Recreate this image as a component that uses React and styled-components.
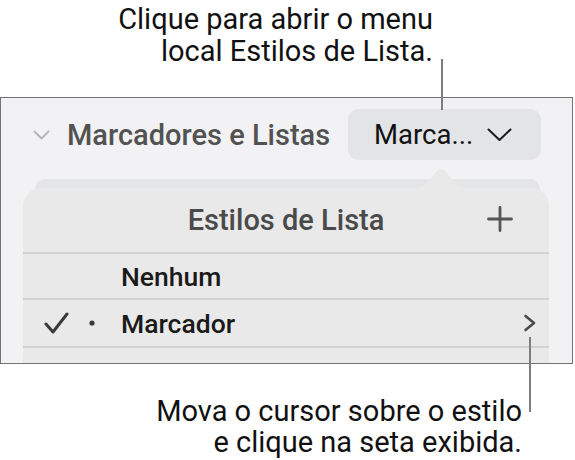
import React from 'react';
import styled, { createGlobalStyle } from 'styled-components';

const GlobalStyle = createGlobalStyle`
  html, body { margin: 0; padding: 0; background: #ffffff; }
  body { font-family: Roboto, "Liberation Sans", Arial, sans-serif; -webkit-font-smoothing: antialiased; }
`;

const Page = styled.div`
  position: relative;
  width: 575px;
  height: 460px;
  overflow: hidden;
`;

const Caption = styled.p`
  margin: ${p => p.$top || 0}px 0 0;
  width: ${p => p.$right}px;
  text-align: right;
  font-size: 29px;
  line-height: ${p => p.$lh}px;
  color: #111;
  white-space: nowrap;
`;

const Leader = styled.div`
  position: absolute;
  left: ${p => p.$x}px;
  top: ${p => p.$y}px;
  width: 2px;
  height: ${p => p.$h}px;
  background: #7d7d7d;
  z-index: 3;
`;

const Panel = styled.div`
  margin-top: 30px;
  width: 571px;
  height: 265px;
  border: 1px solid #737373;
  background: #f2f2f4;
  overflow: hidden;
`;

const SectionHeader = styled.div`
  display: flex;
  align-items: center;
  height: 51px;
  margin-top: 11px;
  padding-left: 32px;
`;

const SectionTitle = styled.span`
  margin-left: 17px;
  font-size: 29px;
  font-weight: 500;
  color: #525252;
  flex: 1;
  white-space: nowrap;
`;

const PopupButton = styled.div`
  display: flex;
  align-items: center;
  justify-content: space-between;
  width: 193px;
  height: 51px;
  box-sizing: border-box;
  margin-right: 31px;
  padding: 0 29px 0 26px;
  border-radius: 11px;
  background: #e3e4e6;
  font-size: 27.5px;
  color: #111;
`;

const PopoverArea = styled.div`
  position: relative;
  margin-top: 19px;
`;

const BackLayer = styled.div`
  margin: 0 32px 0 34px;
  height: 22px;
  border-radius: 10px 10px 0 0;
  background: #e4e5e7;
`;

const Popover = styled.div`
  position: relative;
  margin: -13px 23px 0 22px;
  border-radius: 18px 18px 0 0;
  background: #e9e9e9;
  height: 200px;
`;

const Arrow = styled.svg`
  position: absolute;
  left: 390px;
  top: -21px;
`;

const PopoverHeader = styled.div`
  position: relative;
  display: flex;
  align-items: center;
  justify-content: center;
  height: 64px;
  border-bottom: 2px solid #d3d3d3;
  font-size: 29px;
  font-weight: 500;
  color: #4a4a4a;
`;

const AddButton = styled.svg`
  position: absolute;
  right: 36px;
  top: 18px;
`;

const Row = styled.div`
  display: flex;
  align-items: center;
  height: ${p => p.$h}px;
  border-bottom: 2px solid #d3d3d3;
  font-size: 26.5px;
  font-weight: 500;
  color: #1a1a1a;
`;

const CheckCell = styled.div`
  box-sizing: border-box;
  width: 64px;
  padding-left: 21px;
  display: flex;
  align-items: center;
`;

const BulletCell = styled.div`
  box-sizing: border-box;
  width: 34px;
  padding-left: 2px;
  display: flex;
  align-items: center;
`;

const RowLabel = styled.span`
  flex: 1;
`;

const Disclosure = styled.svg`
  margin-right: 12px;
`;

export default function App() {
  return (
    <Page>
      <GlobalStyle />
      <Caption $right={433} $top={3} $lh={32}>
        Clique para abrir o menu<br />local Estilos de Lista.
      </Caption>
      <Leader $x={441} $y={59} $h={51} />
      <Panel>
        <SectionHeader>
          <svg width="17" height="10" viewBox="0 0 17 10">
            <path d="M1.5 1.5 L8.5 8.5 L15.5 1.5" fill="none" stroke="#b5b5b5" strokeWidth="1.8" strokeLinecap="round" strokeLinejoin="round" />
          </svg>
          <SectionTitle>Marcadores e Listas</SectionTitle>
          <PopupButton>
            <span>Marca...</span>
            <svg width="25" height="14" viewBox="0 0 25 14">
              <path d="M1.5 1.5 L12.5 12 L23.5 1.5" fill="none" stroke="#1a1a1a" strokeWidth="2" strokeLinecap="round" strokeLinejoin="round" />
            </svg>
          </PopupButton>
        </SectionHeader>
        <PopoverArea>
          <BackLayer />
          <Popover>
            <Arrow width="56" height="22" viewBox="0 0 56 22">
              <path d="M0 22 C12 22 18 10 24 4 Q28 0 32 4 C38 10 44 22 56 22 Z" fill="#e9e9e9" />
            </Arrow>
            <PopoverHeader>
              Estilos de Lista
              <AddButton width="26" height="26" viewBox="0 0 26 26">
                <path d="M13 1.5 V24.5 M1.5 13 H24.5" stroke="#555" strokeWidth="2.8" strokeLinecap="round" />
              </AddButton>
            </PopoverHeader>
            <Row $h={44}>
              <CheckCell />
              <BulletCell />
              <RowLabel>Nenhum</RowLabel>
            </Row>
            <Row $h={46}>
              <CheckCell>
                <svg width="25" height="22" viewBox="0 0 25 22">
                  <path d="M2 12 L9 20 L23 2" fill="none" stroke="#3a3a3a" strokeWidth="3" strokeLinecap="round" strokeLinejoin="round" />
                </svg>
              </CheckCell>
              <BulletCell>
                <svg width="6" height="6" viewBox="0 0 6 6">
                  <circle cx="3" cy="3" r="2.6" fill="#3a3a3a" />
                </svg>
              </BulletCell>
              <RowLabel>Marcador</RowLabel>
              <Disclosure width="14" height="18" viewBox="0 0 14 18">
                <path d="M2.5 2 L11 9 L2.5 16" fill="none" stroke="#4a4a4a" strokeWidth="2.6" strokeLinecap="round" strokeLinejoin="round" />
              </Disclosure>
            </Row>
          </Popover>
        </PopoverArea>
      </Panel>
      <Leader $x={529} $y={337} $h={75} />
      <Caption $right={522} $top={32} $lh={31}>
        Mova o cursor sobre o estilo<br />e clique na seta exibida.
      </Caption>
    </Page>
  );
}
